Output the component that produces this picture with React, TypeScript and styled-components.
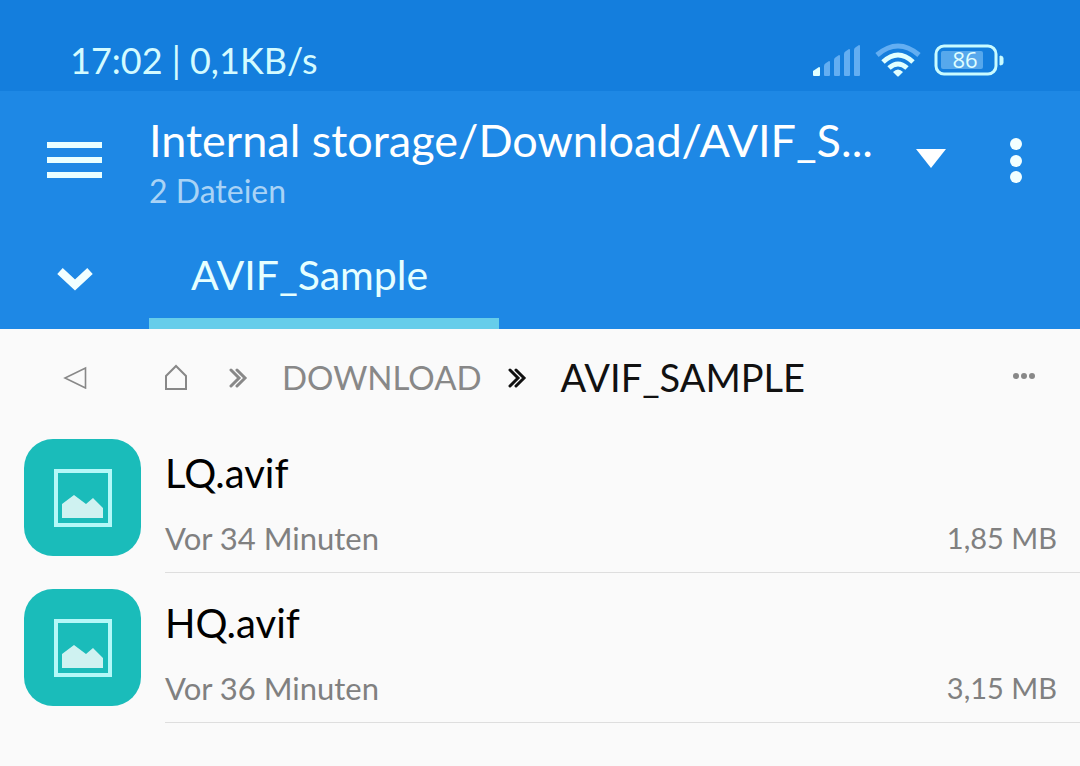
import React from 'react';
import styled, { createGlobalStyle } from 'styled-components';

const Global = createGlobalStyle`
  *, *::before, *::after { box-sizing: border-box; }
  body { margin: 0; background: #fafafa; font-family: Lato, "Open Sans", sans-serif; color: #000; }
  button { font: inherit; color: inherit; background: none; border: 0; padding: 0; margin: 0; cursor: pointer; }
  h1, p, ul, ol { margin: 0; padding: 0; font-weight: 400; }
  ul, ol { list-style: none; }
  svg { display: block; }
`;

const StatusBar = styled.div`
  display: flex;
  align-items: center;
  justify-content: space-between;
  height: 91px;
  padding: 28px 76px 0 70px;
  background: #147edd;
  color: #d3fbff;
  font-size: 36px;
  line-height: 48px;
`;

const StatusIcons = styled.div`
  display: flex;
  align-items: center;
  gap: 13px;
`;

const Header = styled.header`
  background: #1e88e5;
  color: #fff;
`;

const TitleRow = styled.div`
  display: flex;
  height: 138px;
`;

const IconButton = styled.button<{ $width: number }>`
  display: flex;
  flex: none;
  align-items: center;
  justify-content: center;
  width: ${(p) => p.$width}px;
`;

const TitleBlock = styled.div`
  flex: 1;
  min-width: 0;
  padding-top: 22px;
`;

const Title = styled.h1`
  overflow: hidden;
  font-size: 45px;
  line-height: 54px;
  white-space: nowrap;
`;

const Subtitle = styled.p`
  color: #a9d3f6;
  font-size: 32px;
  line-height: 48px;
`;

const TabRow = styled.nav`
  display: flex;
  height: 100px;
`;

const Tab = styled.a`
  width: 350px;
  padding: 18px 42px 0;
  border-bottom: 11px solid #66cdea;
  color: #e6ffff;
  font-size: 41px;
  line-height: 56px;
  text-decoration: none;
  white-space: nowrap;
`;

const PathRow = styled.nav`
  display: flex;
  align-items: center;
  height: 94px;
  padding-top: 2px;
  color: #888;
`;

const Crumbs = styled.ol`
  display: flex;
  flex: 1;
  align-items: center;
  min-width: 0;
`;

const Crumb = styled.li<{ $current?: boolean }>`
  display: flex;
  align-items: center;
  color: ${(p) => (p.$current ? '#111' : '#888')};
  font-size: ${(p) => (p.$current ? 38 : 33)}px;
  line-height: 48px;
  white-space: nowrap;
`;

const CrumbLink = styled.a`
  color: inherit;
  text-decoration: none;
`;

const Separator = styled.span`
  flex: none;
  padding: 2px 34px 0 26px;
`;

const FileRow = styled.li`
  display: flex;
  gap: 24px;
  height: 150px;
  padding: 16px 0 0 24px;
`;

const Thumb = styled.div`
  display: flex;
  flex: none;
  align-items: center;
  justify-content: center;
  width: 117px;
  height: 117px;
  border-radius: 29px;
  background: #1abcba;
`;

const FileInfo = styled.div`
  flex: 1;
  min-width: 0;
  padding: 7px 23px 0 0;
  border-bottom: 1px solid #dedede;
`;

const FileName = styled.p`
  font-size: 40px;
  line-height: 54px;
`;

const FileMeta = styled.div`
  display: flex;
  justify-content: space-between;
  padding-top: 14px;
  color: #808080;
  font-size: 31px;
  line-height: 48px;
`;

const FileSize = styled.span`
  font-size: 29px;
`;

const SignalIcon = () => (
  <svg width="50" height="34" viewBox="0 0 50 34" aria-hidden="true">
    <path d="M1 32v-4l6-4q1 0 1 1v7q0 1-1 1H2q-1 0-1-1z" fill="#e0ffff" />
    <g fill="#63aef2">
      <path d="M12 32V23q0-2 2-3l3-2q1 0 1 1v13q0 1-1 1h-4q-1 0-1-1z" />
      <path d="M22 32V17q0-2 2-3l3-2q1 0 1 1v19q0 1-1 1h-4q-1 0-1-1z" />
      <path d="M32 32V11q0-2 2-3l3-2q1 0 1 1v25q0 1-1 1h-4q-1 0-1-1z" />
      <path d="M42 32V7q0-2 2-3l3-2q1 0 1 1v29q0 1-1 1h-4q-1 0-1-1z" />
    </g>
  </svg>
);

const WifiIcon = () => (
  <svg width="46" height="34" viewBox="0 0 46 34" fill="none" strokeWidth="5" aria-hidden="true">
    <path d="M2 12Q23-6 44 12" stroke="#63aef2" />
    <path d="M8 19Q23 5 38 19" stroke="#e0ffff" />
    <path d="M14 25Q23 17 32 25" stroke="#e0ffff" />
    <path d="M18 29q5-5 10 0l-4 4q-1 1-2 0z" fill="#e0ffff" />
  </svg>
);

const Battery = () => (
  <svg width="70" height="32" viewBox="0 0 70 32" role="img" aria-label="86 %">
    <rect x="2" y="2" width="60" height="28" rx="8" fill="none" stroke="#c9fbff" strokeWidth="3" />
    <rect x="7" y="7" width="42" height="18" rx="2" fill="#57a8ec" />
    <path d="M66 12q3 0 3 2v5q0 2-3 2z" fill="#c9fbff" stroke="#c9fbff" />
    <text x="31" y="24" textAnchor="middle" fill="#e0ffff" fontSize="22" fontFamily="Open Sans, sans-serif">86</text>
  </svg>
);

const ChevronPair = () => (
  <svg width="19" height="20" viewBox="0 0 19 20" fill="none" stroke="currentColor" strokeWidth="3" strokeLinecap="round" aria-hidden="true">
    <path d="M2 2l8 8-8 8M8 2l8 8-8 8" />
  </svg>
);

const ImageIcon = () => (
  <svg width="59" height="59" viewBox="0 0 59 59" aria-hidden="true">
    <rect x="3" y="3" width="54" height="54" fill="none" stroke="#b4f8f8" strokeWidth="4" />
    <path d="M9 50V36l12-9 12 9 7-6 10 10v10z" fill="#cff2f1" />
  </svg>
);

const files = [
  { name: 'LQ.avif', age: 'Vor 34 Minuten', size: '1,85 MB' },
  { name: 'HQ.avif', age: 'Vor 36 Minuten', size: '3,15 MB' },
];

export default function App() {
  return (
    <>
      <Global />
      <StatusBar>
        <span>17:02 | 0,1KB/s</span>
        <StatusIcons>
          <SignalIcon />
          <WifiIcon />
          <Battery />
        </StatusIcons>
      </StatusBar>
      <Header>
        <TitleRow>
          <IconButton $width={149} aria-label="Menu">
            <svg width="56" height="38" viewBox="0 0 56 38" fill="#eaffff">
              <path d="M0 1h55v6H0zM0 16h55v6H0zM0 31h55v6H0z" />
            </svg>
          </IconButton>
          <TitleBlock>
            <Title>Internal storage/Download/AVIF_S...</Title>
            <Subtitle>2 Dateien</Subtitle>
          </TitleBlock>
          <IconButton $width={42} aria-label="Choose folder">
            <svg width="30" height="22" viewBox="0 0 30 22" fill="#fff">
              <path d="M0 0h30L15 19z" />
            </svg>
          </IconButton>
          <IconButton $width={128} aria-label="More options">
            <svg width="12" height="46" viewBox="0 0 12 46" fill="#f2ffff">
              <circle cx="6" cy="7" r="6" />
              <circle cx="6" cy="24" r="6" />
              <circle cx="6" cy="40" r="6" />
            </svg>
          </IconButton>
        </TitleRow>
        <TabRow>
          <IconButton $width={149} aria-label="Show tabs">
            <svg width="36" height="24" viewBox="0 0 36 24" fill="none" stroke="#f2ffff" strokeWidth="8">
              <path d="M3 4l15 14L33 4" />
            </svg>
          </IconButton>
          <Tab href="#tab">AVIF_Sample</Tab>
        </TabRow>
      </Header>
      <main>
        <PathRow aria-label="Path">
          <IconButton $width={149} aria-label="Back">
            <svg width="24" height="24" viewBox="0 0 24 24" fill="none" stroke="currentColor" strokeWidth="1.6">
              <path d="M22.500 3v20L2 13z" />
            </svg>
          </IconButton>
          <Crumbs>
            <Crumb>
              <IconButton $width={54} aria-label="Home">
                <svg width="24" height="26" viewBox="0 0 24 26" fill="none" stroke="currentColor" strokeWidth="2">
                  <path d="M2 25V12L12 2l10 10v13z" />
                </svg>
              </IconButton>
            </Crumb>
            <Crumb>
              <Separator><ChevronPair /></Separator>
              <CrumbLink href="#download">DOWNLOAD</CrumbLink>
            </Crumb>
            <Crumb $current>
              <Separator><ChevronPair /></Separator>
              <CrumbLink href="#sample" aria-current="page">AVIF_SAMPLE</CrumbLink>
            </Crumb>
          </Crumbs>
          <IconButton $width={112} aria-label="More">
            <svg width="22" height="8" viewBox="0 0 22 8" fill="currentColor">
              <circle cx="3" cy="3" r="3" />
              <circle cx="11" cy="3" r="3" />
              <circle cx="19" cy="3" r="3" />
            </svg>
          </IconButton>
        </PathRow>
        <ul>
          {files.map((file) => (
            <FileRow key={file.name}>
              <Thumb><ImageIcon /></Thumb>
              <FileInfo>
                <FileName>{file.name}</FileName>
                <FileMeta>
                  <span>{file.age}</span>
                  <FileSize>{file.size}</FileSize>
                </FileMeta>
              </FileInfo>
            </FileRow>
          ))}
        </ul>
      </main>
    </>
  );
}
